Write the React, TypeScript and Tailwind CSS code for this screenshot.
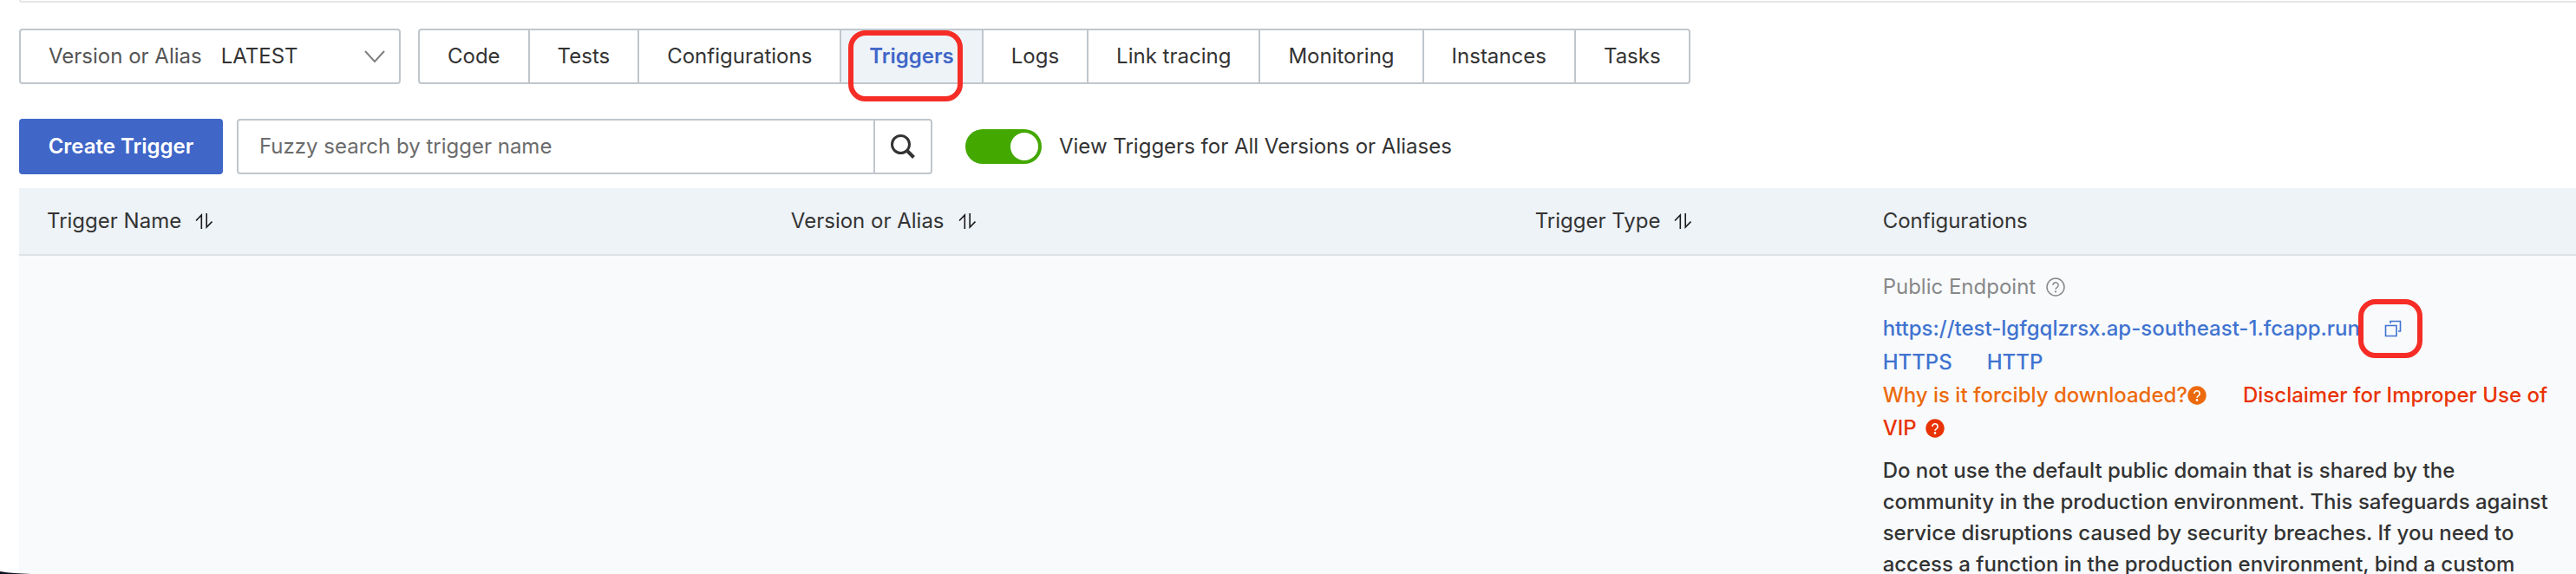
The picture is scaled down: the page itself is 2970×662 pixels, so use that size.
import React, { useState } from 'react';

const tabs = ['Code', 'Tests', 'Configurations', 'Triggers', 'Logs', 'Link tracing', 'Monitoring', 'Instances', 'Tasks'];

const columns = [
  { title: 'Trigger Name', sortable: true },
  { title: 'Version or Alias', sortable: true },
  { title: 'Trigger Type', sortable: true },
  { title: 'Configurations', sortable: false },
];

const SortIcon = () => (
  <svg className="block w-5 h-5" viewBox="0 0 20 20" fill="none" stroke="#1a1a1a" strokeWidth="1.6" aria-hidden="true">
    <path d="M1 9.5L7.3 3V19" />
    <path d="M19.5 10.5L13.2 17V1" />
  </svg>
);

const HelpIcon = ({ className = '' }: { className?: string }) => (
  <svg className={`w-[22px] h-[22px] ${className}`} viewBox="0 0 22 22" fill="none" stroke="currentColor" aria-hidden="true">
    <circle cx="11" cy="11" r="10" strokeWidth="1.5" />
    <path d="M7.9 8.9a3.1 3.1 0 1 1 4.9 2.5c-1.2.8-1.8 1.3-1.8 2.4" strokeWidth="1.5" />
    <circle cx="11" cy="16.4" r="1.1" fill="currentColor" stroke="none" />
  </svg>
);

const HelpFilledIcon = ({ className = '' }: { className?: string }) => (
  <svg className={`w-[22px] h-[22px] ${className}`} viewBox="0 0 22 22" fill="none" aria-hidden="true">
    <circle cx="11" cy="11" r="10.7" fill="currentColor" />
    <path d="M7.9 8.9a3.1 3.1 0 1 1 4.9 2.5c-1.2.8-1.8 1.3-1.8 2.4" stroke="#fff" strokeWidth="1.7" />
    <circle cx="11" cy="16.4" r="1.3" fill="#fff" />
  </svg>
);

const App: React.FC = () => {
  const [activeTab, setActiveTab] = useState('Triggers');
  const [showAll, setShowAll] = useState(true);
  const [search, setSearch] = useState('');

  return (
    <div className="relative h-screen overflow-hidden bg-white pl-[22px] font-[Inter,sans-serif] text-2xl text-[#333]">
      <div className="h-[3px] rounded-bl border-b-2 border-l-2 border-[#e3e4e6]" />

      <div className="mt-[30px] flex items-center gap-5">
        <div className="relative flex h-16 w-[440px] items-center rounded border-2 border-[#c0c6cc]">
          <label htmlFor="version" className="pl-8 whitespace-nowrap text-[#555]">
            Version or Alias
          </label>
          <select id="version" className="h-full flex-1 appearance-none bg-transparent pl-[22px] outline-none">
            <option>LATEST</option>
          </select>
          <svg className="pointer-events-none absolute right-4 h-4 w-6" viewBox="0 0 24 16" fill="none" stroke="#808080" strokeWidth="2" aria-hidden="true">
            <path d="M1 2L12 14L23 2" />
          </svg>
        </div>

        <div className="flex h-16 rounded border-2 border-[#c0c6cc]">
          {tabs.map((tab) => (
            <div key={tab} className="relative flex border-l-2 border-[#c0c6cc] first:border-l-0">
              <button
                onClick={() => setActiveTab(tab)}
                className={tab === activeTab ? 'bg-[#eef3f8] px-8 font-semibold text-[#4066c8]' : 'px-8 whitespace-nowrap'}
              >
                {tab}
              </button>
              {tab === 'Triggers' && (
                <span className="pointer-events-none absolute top-0 left-2 h-[82px] w-[132px] rounded-[20px] border-6 border-[#f52d26]" />
              )}
            </div>
          ))}
        </div>
      </div>

      <div className="mt-10 flex items-center">
        <button className="h-16 w-[235px] rounded bg-[#4066c8] font-semibold whitespace-nowrap text-white">Create Trigger</button>
        <div className="ml-4 flex h-16 w-[802px] rounded border-2 border-[#c0c6cc]">
          <input
            type="text"
            aria-label="Search triggers"
            placeholder="Fuzzy search by trigger name"
            value={search}
            onChange={(e) => setSearch(e.target.value)}
            className="min-w-0 flex-1 px-6 outline-none placeholder:text-[#6b6b6b]"
          />
          <button aria-label="Search" className="flex w-[66px] items-center justify-center border-l-2 border-[#c0c6cc]">
            <svg className="h-7 w-7" viewBox="0 0 28 28" fill="none" stroke="#333" strokeWidth="3" aria-hidden="true">
              <circle cx="11.5" cy="11.5" r="10" />
              <path d="M18.5 18.5L26.5 26.5" strokeWidth="4" />
            </svg>
          </button>
        </div>
        <label className="ml-[38px] flex items-center gap-5 whitespace-nowrap">
          <input
            type="checkbox"
            role="switch"
            checked={showAll}
            onChange={(e) => setShowAll(e.target.checked)}
            className="h-10 w-[88px] appearance-none rounded-full bg-[#c0c6cc] p-1 before:block before:h-8 before:w-8 before:rounded-full before:bg-white checked:bg-[#43a800] checked:before:ml-auto"
          />
          View Triggers for All Versions or Aliases
        </label>
      </div>

      <table className="mt-4 w-full table-fixed border-separate border-spacing-0 text-left">
        <colgroup>
          <col className="w-[29.1%]" />
          <col className="w-[29.1%]" />
          <col className="w-[13.6%]" />
          <col />
        </colgroup>
        <thead>
          <tr className="h-[78px] bg-[#eef3f8]">
            {columns.map((col) => (
              <th key={col.title} className="border-b-2 border-[#dee1e5] pl-8 font-normal">
                <div className="flex items-center gap-4">
                  {col.title}
                  {col.sortable && (
                    <button aria-label={`Sort by ${col.title}`}>
                      <SortIcon />
                    </button>
                  )}
                </div>
              </th>
            ))}
          </tr>
        </thead>
        <tbody>
          <tr className="bg-[#f8fafc] align-top">
            <td />
            <td />
            <td />
            <td className="py-4 pr-6 pl-8 font-medium">
              <div className="flex h-10 items-center gap-3 font-normal text-[#888]">
                Public Endpoint
                <HelpIcon />
              </div>
              <div className="mt-2 flex h-10 items-center gap-7 whitespace-nowrap text-[#4073d0]">
                <a href="https://test-lgfgqlzrsx.ap-southeast-1.fcapp.run">https://test-lgfgqlzrsx.ap-southeast-1.fcapp.run</a>
                <button aria-label="Copy endpoint" className="relative">
                  <svg className="block h-5 w-5" viewBox="0 0 20 20" fill="none" stroke="currentColor" strokeWidth="1.6" aria-hidden="true">
                    <path d="M1.5 6.5H14V18.5H1.5Z" />
                    <path d="M7 4V1.5H18.5V13H16" />
                  </svg>
                  <span className="pointer-events-none absolute -top-6 -left-[30px] h-[68px] w-[74px] rounded-[20px] border-6 border-[#f52d26]" />
                </button>
              </div>
              <div className="flex h-[38px] items-center gap-10 text-[#4073d0]">
                <a href="#https">HTTPS</a>
                <a href="#http">HTTP</a>
              </div>
              <div className="leading-[38px]">
                <a href="#download" className="mr-[42px] text-[#ed6a0c]">
                  Why is it forcibly downloaded?
                  <HelpFilledIcon className="inline align-[-3px]" />
                </a>
                <a href="#disclaimer" className="text-[#e93304]">
                  Disclaimer for Improper Use of VIP <HelpFilledIcon className="ml-1 inline align-[-3px]" />
                </a>
              </div>
              <p className="mt-3 leading-9">
                Do not use the default public domain that is shared by the community in the production environment. This
                safeguards against service disruptions caused by security breaches. If you need to access a function in
                the production environment, bind a custom
              </p>
            </td>
          </tr>
        </tbody>
      </table>

      {/* window corner */}
      <svg className="absolute bottom-0 left-0 h-1 w-9" viewBox="0 0 36 4" aria-hidden="true">
        <path d="M0 1C10 3 22 3.2 36 4H0Z" fill="#0d1020" />
      </svg>
    </div>
  );
};

export default App;
